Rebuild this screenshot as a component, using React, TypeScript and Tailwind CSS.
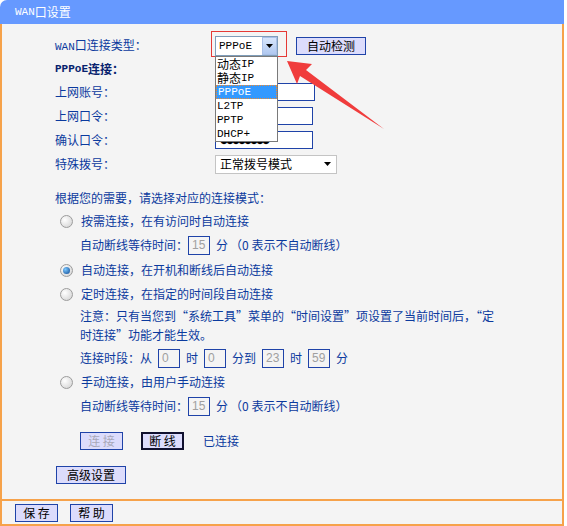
import React from "react";

const blue = "text-[#0b3a9e]";

const Mono = ({ children }: { children: React.ReactNode }) => (
    <span className="[font-family:Liberation_Mono,monospace] text-[11px]">{children}</span>
);

const Radio = ({ checked }: { checked?: boolean }) => (
    <span className="ml-[5px] mr-[8px] flex h-[13px] w-[13px] items-center justify-center rounded-full border border-[#9c9c9c] bg-[radial-gradient(circle_at_35%_35%,#ffffff,#cfcfcf)]">
        {checked && (
            <span className="h-[7px] w-[7px] rounded-full bg-[radial-gradient(circle_at_35%_35%,#7cc8ff,#0a4590)]" />
        )}
    </span>
);

const SmallInput = ({ value }: { value: string }) => (
    <span className="flex h-[19px] w-[22px] items-center border border-[#1f43a8] pl-[3px] text-[12px] text-[#a0a0a0] [font-family:Liberation_Sans,sans-serif]">
        {value}
    </span>
);

const Btn = ({
    children,
    w,
    dim,
    strong,
}: {
    children: React.ReactNode;
    w: string;
    dim?: boolean;
    strong?: boolean;
}) => (
    <span
        className={`flex h-[18px] items-center justify-center bg-[#dcdcfc] text-[12px] ${w} ${
            strong ? "border-2 border-[#10102e] text-black" : "border border-[#1f43a8]"
        } ${dim ? "text-[#a8a8b8]" : "text-black"}`}
    >
        {children}
    </span>
);

const TextInput = ({ w, children }: { w: string; children?: React.ReactNode }) => (
    <span className={`flex h-[18px] items-end overflow-hidden border border-[#1f43a8] bg-white pl-[4px] ${w}`}>
        {children}
    </span>
);

export default function App() {
    return (
        <div className="relative h-[526px] w-[567px] bg-white text-[12px] [font-family:Noto_Sans_CJK_SC,Liberation_Sans,sans-serif]">
            <div className="flex h-[24px] w-[564px] items-center rounded-tl-[7px] bg-[#6699ff] pl-[15px] text-white">
                <Mono>WAN</Mono>口设置
            </div>
            <div className="flex h-[502px] w-[564px] flex-col border-x-2 border-b-2 border-[#f6a24a] bg-[#f4f4f4]">
                <div className={`h-[475px] pl-[53px] pt-[10px] ${blue}`}>
                    <div className="flex h-[24px] items-center">
                        <span className="w-[160px]">
                            <Mono>WAN</Mono>口连接类型：
                        </span>
                        <div className="relative h-[20px] w-[63px]">
                            <div className="absolute -left-[4px] -top-[5px] h-[26px] w-[76px] border border-[#e53935]" />
                            <div className="relative flex h-[20px] items-center border border-[#7f9db9] bg-white pl-[3px] text-black">
                                <Mono>PPPoE</Mono>
                                <span className="absolute right-0 top-0 flex h-[18px] w-[15px] items-center justify-center border border-[#a9c0e8] bg-[linear-gradient(#d8e6fc,#b0c8f0)]">
                                    <svg width="7" height="4" viewBox="0 0 7 4">
                                        <path d="M0 0h7L3.5 4z" fill="#000" />
                                    </svg>
                                </span>
                            </div>
                            <div className="absolute left-0 top-[20px] z-10 flex w-[63px] flex-col border border-[#7a7a7a] bg-white text-black">
                                {["动态IP", "静态IP", "PPPoE", "L2TP", "PPTP", "DHCP+"].map((o) => (
                                    <span
                                        key={o}
                                        className={`flex h-[14px] items-center pl-[1px] ${
                                            o === "PPPoE"
                                                ? "border border-dotted border-[#f08a30] bg-[#3399ff] text-white"
                                                : ""
                                        }`}
                                    >
                                        {o.startsWith("动") || o.startsWith("静") ? (
                                            <>
                                                {o.slice(0, 2)}
                                                <Mono>IP</Mono>
                                            </>
                                        ) : (
                                            <Mono>{o}</Mono>
                                        )}
                                    </span>
                                ))}
                            </div>
                        </div>
                        <span className="ml-[18px]">
                            <Btn w="w-[70px]">自动检测</Btn>
                        </span>
                    </div>
                    <div className="flex h-[22px] items-center font-bold text-[#07226e]">
                        <Mono>PPPoE</Mono>连接：
                    </div>
                    <div className="flex h-[24px] items-center">
                        <span className="w-[160px]">上网账号：</span>
                        <TextInput w="w-[100px]" />
                    </div>
                    <div className="flex h-[24px] items-center">
                        <span className="w-[160px]">上网口令：</span>
                        <TextInput w="w-[98px]" />
                    </div>
                    <div className="flex h-[24px] items-center">
                        <span className="w-[160px]">确认口令：</span>
                        <TextInput w="w-[98px]">
                            <span className="mb-[3px] text-[8px] leading-none tracking-[-2px] text-black">
                                ●●●●●●●●
                            </span>
                        </TextInput>
                    </div>
                    <div className="flex h-[24px] items-center">
                        <span className="w-[160px]">特殊拨号：</span>
                        <span className="flex h-[19px] w-[122px] items-center justify-between border border-[#c4c4c4] bg-white pl-[4px] pr-[5px] text-black">
                            正常拨号模式
                            <svg width="7" height="4" viewBox="0 0 7 4">
                                <path d="M0 0h7L3.5 4z" fill="#000" />
                            </svg>
                        </span>
                    </div>

                    <div className="mt-[11px] flex h-[22px] items-center">根据您的需要，请选择对应的连接模式：</div>
                    <div className="flex h-[24px] items-center">
                        <Radio />
                        按需连接，在有访问时自动连接
                    </div>
                    <div className="flex h-[24px] items-center pl-[25px]">
                        自动断线等待时间：
                        <SmallInput value="15" />
                        <span className="ml-[6px]">分</span>
                        <span className="ml-[2px]">（0 表示不自动断线）</span>
                    </div>
                    <div className="mt-[1px] flex h-[24px] items-center">
                        <Radio checked />
                        自动连接，在开机和断线后自动连接
                    </div>
                    <div className="flex h-[24px] items-center">
                        <Radio />
                        定时连接，在指定的时间段自动连接
                    </div>
                    <div className="whitespace-nowrap pl-[25px] leading-[19px]">
                        注意：只有当您到“系统工具”菜单的“时间设置”项设置了当前时间后，“定
                        <br />
                        时连接”功能才能生效。
                    </div>
                    <div className="mt-[2px] flex h-[24px] items-center gap-[6px] pl-[25px]">
                        <span className="-mr-[6px] w-[78px]">连接时段：从</span>
                        <SmallInput value="0" />
                        <span>时</span>
                        <SmallInput value="0" />
                        <span>分到</span>
                        <SmallInput value="23" />
                        <span>时</span>
                        <SmallInput value="59" />
                        <span>分</span>
                    </div>
                    <div className="flex h-[24px] items-center">
                        <Radio />
                        手动连接，由用户手动连接
                    </div>
                    <div className="flex h-[24px] items-center pl-[25px]">
                        自动断线等待时间：
                        <SmallInput value="15" />
                        <span className="ml-[6px]">分</span>
                        <span className="ml-[2px]">（0 表示不自动断线）</span>
                    </div>
                    <div className="mt-[11px] flex h-[24px] items-center pl-[25px]">
                        <Btn w="w-[43px]" dim>
                            连&nbsp;接
                        </Btn>
                        <span className="ml-[18px]">
                            <Btn w="w-[43px]" strong>
                                断&nbsp;线
                            </Btn>
                        </span>
                        <span className="ml-[19px]">已连接</span>
                    </div>
                    <div className="mt-[10px] flex h-[24px] items-center pl-[1px]">
                        <Btn w="w-[70px]">高级设置</Btn>
                    </div>
                </div>
                <div className="flex flex-1 items-center gap-[12px] border-t-2 border-[#f6a24a] pl-[13px]">
                    <Btn w="w-[43px]">保&nbsp;存</Btn>
                    <Btn w="w-[43px]">帮&nbsp;助</Btn>
                </div>
            </div>
            <svg
                className="pointer-events-none absolute left-0 top-0 z-20"
                width="567"
                height="526"
                viewBox="0 0 567 526"
            >
                <polygon
                    points="287,61 312,64 306,70 384,129 300,76 297,84"
                    fill="#f03c3c"
                />
            </svg>
        </div>
    );
}
